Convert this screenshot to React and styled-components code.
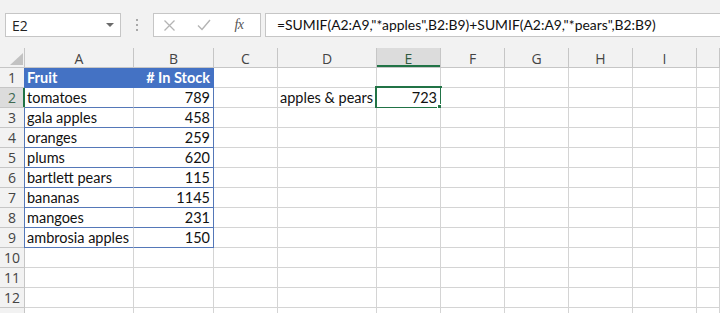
import React from 'react';
import styled, { createGlobalStyle } from 'styled-components';

const GlobalStyle = createGlobalStyle`
  html, body { margin: 0; padding: 0; background: #fff; overflow: hidden; }
  #root { width: 720px; height: 313px; overflow: hidden; }
`;

const CELL_FONT = `"Lato", "Liberation Sans", sans-serif`;
const UI_FONT = `"Open Sans", "Noto Sans", sans-serif`;

const GRID = '#d4d4d4';
const HEAD_LINE = '#c6c6c6';
const HEAD_BG = '#f2f2f2';
const HEAD_SEL = '#dcdcdc';
const TABLE_LINE = '#5578b8';
const TABLE_FILL = '#4472c4';
const GREEN = '#217346';

const Sheet = styled.div`
  width: 720px;
  height: 313px;
  overflow: hidden;
  background: #fff;
  display: flex;
  flex-direction: column;
`;

const FormulaBar = styled.div`
  height: 48px;
  flex: none;
  box-sizing: border-box;
  background: ${HEAD_BG};
  display: flex;
  align-items: flex-start;
  padding: 13px 0 0 5px;
`;

const NameBox = styled.div`
  width: 116px;
  height: 24px;
  box-sizing: border-box;
  background: #fff;
  border: 1px solid ${HEAD_LINE};
  display: flex;
  align-items: center;
  justify-content: space-between;
  padding: 0 6px 0 6px;
  font: 14px ${UI_FONT};
  color: #222;
`;

const Caret = styled.span`
  width: 0;
  height: 0;
  border-left: 4px solid transparent;
  border-right: 4px solid transparent;
  border-top: 4px solid #6a6a6a;
`;

const Grip = styled.div`
  width: 32px;
  height: 24px;
  display: flex;
  flex-direction: column;
  align-items: center;
  justify-content: center;
  gap: 3px;
`;

const GripDot = styled.span`
  width: 2px;
  height: 2px;
  background: #a9a9a9;
`;

const FxBox = styled.div`
  width: 108px;
  height: 24px;
  box-sizing: border-box;
  background: #fff;
  border: 1px solid ${HEAD_LINE};
  display: flex;
  align-items: center;
  padding-left: 8px;
  gap: 21px;
`;

const IconSlot = styled.span`
  width: 14px;
  height: 14px;
  display: flex;
  align-items: center;
  justify-content: center;
`;

const FxLabel = styled.span`
  font: italic 14px "Liberation Serif", serif;
  color: #555;
  letter-spacing: -0.5px;
  line-height: 14px;
`;

const FormulaInput = styled.div`
  flex: 1;
  margin-left: 4px;
  height: 24px;
  box-sizing: border-box;
  background: #fff;
  border: 1px solid ${HEAD_LINE};
  border-right: none;
  padding-left: 11px;
  font: 13.9px ${CELL_FONT};
  line-height: 22px;
  color: #111;
  white-space: nowrap;
  overflow: hidden;
`;

const Grid = styled.div`
  display: flex;
  flex-direction: column;
`;

const Row = styled.div`
  display: flex;
  height: 20px;
  flex: none;
`;

const Corner = styled.div`
  width: 25px;
  flex: none;
  box-sizing: border-box;
  background: ${HEAD_BG};
  border-right: 1px solid ${HEAD_LINE};
  border-bottom: 1px solid ${HEAD_LINE};
  display: flex;
  align-items: flex-end;
  justify-content: flex-end;
  padding: 0 1px 2px 0;
`;

const CornerTriangle = styled.span`
  width: 0;
  height: 0;
  border-left: 13px solid transparent;
  border-bottom: 12px solid #c2c2c2;
`;

const ColHead = styled.div`
  width: ${p => (p.$w ? `${p.$w}px` : 'auto')};
  flex: ${p => (p.$w ? 'none' : '1')};
  min-width: 0;
  box-sizing: border-box;
  background: ${p => (p.$sel ? HEAD_SEL : HEAD_BG)};
  border-right: 1px solid ${HEAD_LINE};
  border-bottom: 1px solid ${HEAD_LINE};
  box-shadow: ${p => (p.$sel ? `inset 0 -2px 0 ${GREEN}` : 'none')};
  display: flex;
  align-items: center;
  justify-content: center;
  font: 14px ${UI_FONT};
  color: ${p => (p.$sel ? '#2f5a40' : '#444')};
  padding-top: 1px;
`;

const RowHead = styled.div`
  width: 25px;
  flex: none;
  box-sizing: border-box;
  background: ${p => (p.$sel ? HEAD_SEL : HEAD_BG)};
  border-right: 1px solid ${p => (p.$sel ? GREEN : HEAD_LINE)};
  border-bottom: 1px solid ${HEAD_LINE};
  box-shadow: ${p => (p.$sel ? `inset -1px 0 0 ${GREEN}` : 'none')};
  display: flex;
  align-items: center;
  justify-content: center;
  font: 14px ${UI_FONT};
  color: ${p => (p.$sel ? '#3f6a52' : '#444')};
`;

const Cell = styled.div`
  position: relative;
  width: ${p => (p.$w ? `${p.$w}px` : 'auto')};
  flex: ${p => (p.$w ? 'none' : '1')};
  min-width: 0;
  box-sizing: border-box;
  background: ${p => p.$fill || '#fff'};
  border-right: 1px solid ${p => p.$rc || GRID};
  border-bottom: 1px solid ${p => p.$bc || GRID};
  padding: 0 3px 0 2px;
  display: flex;
  align-items: center;
  justify-content: ${p => (p.$right ? 'flex-end' : 'flex-start')};
  font: ${p => (p.$bold ? 700 : 400)} 14.5px ${CELL_FONT};
  line-height: 19px;
  color: ${p => p.$color || '#111'};
  white-space: nowrap;

  &::before {
    content: '';
    display: ${p => (p.$leftEdge ? 'block' : 'none')};
    position: absolute;
    left: -1px;
    top: 0;
    bottom: -1px;
    width: 1px;
    background: ${p => p.$leftEdge};
  }
`;

const Selection = styled.span`
  position: absolute;
  left: -2px;
  right: -2px;
  top: -2px;
  bottom: -2px;
  border: 2px solid ${GREEN};
  pointer-events: none;
`;

const FillHandle = styled.span`
  position: absolute;
  right: -4px;
  bottom: -4px;
  width: 6px;
  height: 6px;
  background: ${GREEN};
  box-shadow: 0 0 0 1px #fff;
`;

// The last column (J) is only partly in view; its letter falls outside the window.
const COLS = [
  { l: 'A', w: 109 },
  { l: 'B', w: 80 },
  { l: 'C', w: 64 },
  { l: 'D', w: 99 },
  { l: 'E', w: 64 },
  { l: 'F', w: 64 },
  { l: 'G', w: 64 },
  { l: 'H', w: 64 },
  { l: 'I', w: 64 },
  { l: '', w: 0 },
];

const TABLE = [
  ['tomatoes', '789'],
  ['gala apples', '458'],
  ['oranges', '259'],
  ['plums', '620'],
  ['bartlett pears', '115'],
  ['bananas', '1145'],
  ['mangoes', '231'],
  ['ambrosia apples', '150'],
];

const XIcon = () => (
  <svg width="13" height="13" viewBox="0 0 13 13">
    <path d="M1.5 1.5 L11.5 11.5 M11.5 1.5 L1.5 11.5" stroke="#b4b4b4" strokeWidth="1.3" fill="none" />
  </svg>
);

const CheckIcon = () => (
  <svg width="14" height="12" viewBox="0 0 14 12">
    <path d="M1 6.5 L5 10.5 L13 1" stroke="#b4b4b4" strokeWidth="1.4" fill="none" />
  </svg>
);

function cellProps(r, c) {
  const p = { $w: COLS[c].w };
  if (r === 1 && c <= 1) {
    p.$fill = TABLE_FILL;
    p.$bold = true;
    p.$color = '#fff';
    p.$bc = TABLE_FILL;
    p.$rc = TABLE_FILL;
    if (c === 0) p.$leftEdge = TABLE_FILL;
    if (c === 1) p.$right = true;
  } else if (r >= 2 && r <= 9 && c <= 1) {
    p.$bc = TABLE_LINE;
    p.$rc = c === 1 ? TABLE_LINE : GRID;
    if (c === 0 && r !== 2) p.$leftEdge = TABLE_LINE;
    if (c === 1) p.$right = true;
  }
  if (r === 2 && c === 4) p.$right = true;
  return p;
}

function cellText(r, c) {
  if (r === 1 && c === 0) return 'Fruit';
  if (r === 1 && c === 1) return '# In Stock';
  if (r >= 2 && r <= 9 && c <= 1) return TABLE[r - 2][c];
  if (r === 2 && c === 3) return 'apples & pears';
  if (r === 2 && c === 4) return '723';
  return '';
}

export default function App() {
  const rows = Array.from({ length: 13 }, (_, i) => i + 1);
  return (
    <Sheet>
      <GlobalStyle />
      <FormulaBar>
        <NameBox>
          <span>E2</span>
          <Caret />
        </NameBox>
        <Grip>
          <GripDot />
          <GripDot />
          <GripDot />
        </Grip>
        <FxBox>
          <IconSlot><XIcon /></IconSlot>
          <IconSlot><CheckIcon /></IconSlot>
          <IconSlot><FxLabel>fx</FxLabel></IconSlot>
        </FxBox>
        <FormulaInput>=SUMIF(A2:A9,"*apples",B2:B9)+SUMIF(A2:A9,"*pears",B2:B9)</FormulaInput>
      </FormulaBar>
      <Grid>
        <Row>
          <Corner>
            <CornerTriangle />
          </Corner>
          {COLS.map((col, i) => (
            <ColHead key={i} $w={col.w} $sel={col.l === 'E'}>
              {col.l}
            </ColHead>
          ))}
        </Row>
        {rows.map(r => (
          <Row key={r}>
            <RowHead $sel={r === 2}>{r <= 12 ? r : ''}</RowHead>
            {COLS.map((col, c) => (
              <Cell key={c} {...cellProps(r, c)}>
                {cellText(r, c)}
                {r === 2 && c === 4 && (
                  <>
                    <Selection />
                    <FillHandle />
                  </>
                )}
              </Cell>
            ))}
          </Row>
        ))}
      </Grid>
    </Sheet>
  );
}
